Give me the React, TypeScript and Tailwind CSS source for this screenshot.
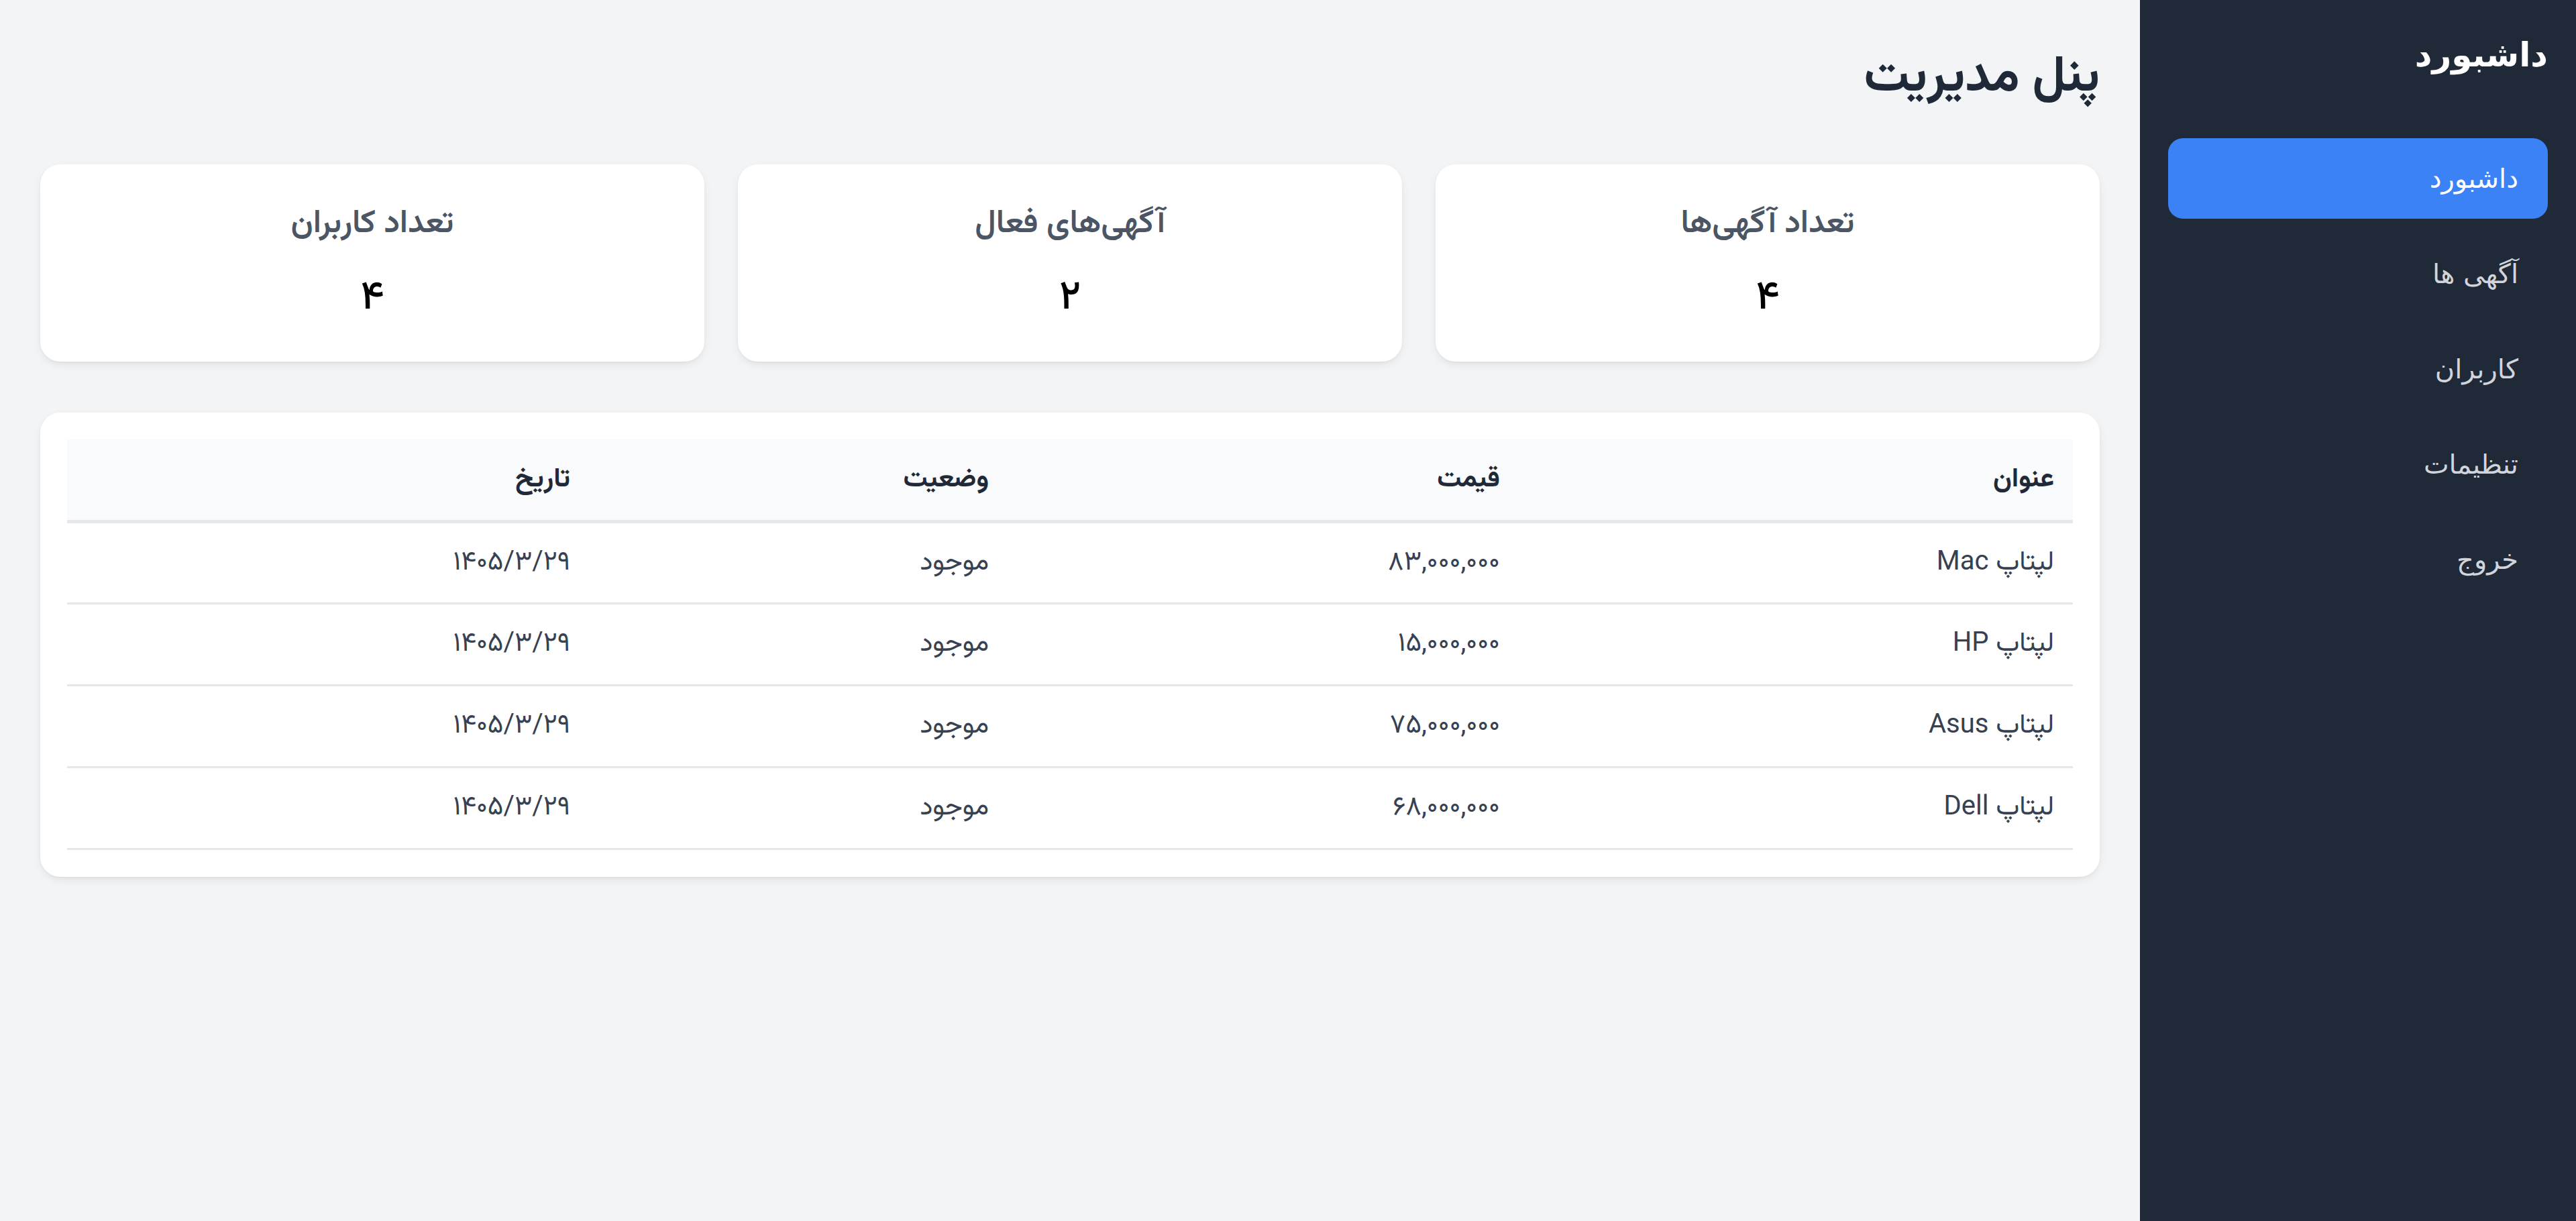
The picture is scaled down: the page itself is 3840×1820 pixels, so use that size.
import React from 'react';

const stats = [
  { title: 'تعداد آگهی‌ها', value: '۴' },
  { title: 'آگهی‌های فعال', value: '۲' },
  { title: 'تعداد کاربران', value: '۴' },
];

const ads = [
  { title: 'لپتاپ Mac', price: '۸۳,۰۰۰,۰۰۰', status: 'موجود', date: '۱۴۰۵/۳/۲۹' },
  { title: 'لپتاپ HP', price: '۱۵,۰۰۰,۰۰۰', status: 'موجود', date: '۱۴۰۵/۳/۲۹' },
  { title: 'لپتاپ Asus', price: '۷۵,۰۰۰,۰۰۰', status: 'موجود', date: '۱۴۰۵/۳/۲۹' },
  { title: 'لپتاپ Dell', price: '۶۸,۰۰۰,۰۰۰', status: 'موجود', date: '۱۴۰۵/۳/۲۹' },
];

const menu = ['داشبورد', 'آگهی ها', 'کاربران', 'تنظیمات', 'خروج'];

const Sidebar = () => (
  <aside className="w-[650px] shrink-0 bg-[#1f2937] px-[42px] pt-[42px] font-['DejaVu_Sans',sans-serif]">
    <h2 className="text-[50px] leading-[80px] font-bold text-white mb-[84px]">داشبورد</h2>
    <nav className="flex flex-col gap-[22px]">
      {menu.map((item, i) => (
        <a
          key={item}
          href="#"
          className={
            i === 0
              ? 'flex items-center h-[120px] px-[44px] rounded-[22px] bg-[#3b82f6] text-white text-[40px]'
              : 'flex items-center h-[120px] px-[44px] rounded-[22px] text-[#d1d5db] text-[40px]'
          }
        >
          {item}
        </a>
      ))}
    </nav>
  </aside>
);

const App = () => {
  return (
    <div dir="rtl" className="flex min-h-screen bg-[#f3f4f6]">
      <Sidebar />

      <main className="flex-1 p-[60px] font-['Vazirmatn','Vazir','Roboto',sans-serif]">
        <h1 className="text-[75px] leading-[114px] font-bold text-[#1f2937] mb-[71px]">پنل مدیریت</h1>

        <div className="grid grid-cols-3 gap-[50px] mb-[76px]">
          {stats.map((s) => (
            <div
              key={s.title}
              className="h-[294px] bg-white rounded-[30px] shadow-[0_5px_15px_-3px_rgba(0,0,0,0.1),0_2px_6px_-2px_rgba(0,0,0,0.05)] pt-[55px] flex flex-col items-center"
            >
              <h3 className="text-[48px] leading-[70px] font-semibold text-[#4b5563]">{s.title}</h3>
              <p className="mt-[35px] text-[60px] leading-[80px] font-medium text-black">{s.value}</p>
            </div>
          ))}
        </div>

        <div className="bg-white rounded-[30px] shadow-[0_5px_15px_-3px_rgba(0,0,0,0.1),0_2px_6px_-2px_rgba(0,0,0,0.05)] p-[40px]">
          <table className="w-full table-fixed border-collapse text-[40px]">
            <thead>
              <tr className="bg-[#f9fafb] border-b-[5px] border-[#e5e7eb]">
                <th className="w-[826px] h-[122px] px-[28px] text-right font-bold text-[#1f2937]">عنوان</th>
                <th className="w-[762px] h-[122px] px-[28px] text-right font-bold text-[#1f2937]">قیمت</th>
                <th className="w-[624px] h-[122px] px-[28px] text-right font-bold text-[#1f2937]">وضعیت</th>
                <th className="h-[122px] px-[28px] text-right font-bold text-[#1f2937]">تاریخ</th>
              </tr>
            </thead>
            <tbody>
              {ads.map((ad) => (
                <tr key={ad.title} className="border-b-[3px] border-[#e5e7eb]">
                  <td className="h-[122px] px-[28px] text-right text-[#374151]">{ad.title}</td>
                  <td className="h-[122px] px-[28px] text-right text-[#374151]">{ad.price}</td>
                  <td className="h-[122px] px-[28px] text-right text-[#374151]">{ad.status}</td>
                  <td className="h-[122px] px-[28px] text-right text-[#374151]">{ad.date}</td>
                </tr>
              ))}
            </tbody>
          </table>
        </div>
      </main>
    </div>
  );
};

export default App;
